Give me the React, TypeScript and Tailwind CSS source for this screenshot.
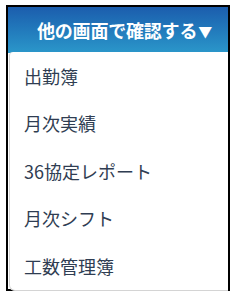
import React from "react";

const items = ["出勤簿", "月次実績", "36協定レポート", "月次シフト", "工数管理簿"];

export default function App() {
  return (
    <div
      className="w-[235px] h-[297px] bg-white pt-[5px] pl-[6px]"
      style={{ fontFamily: '"Noto Sans CJK JP", "Noto Sans", sans-serif' }}
    >
      <div className="w-[224px] h-[286px] border-2 border-black flex flex-col bg-white">
        <div className="h-[46px] shrink-0 bg-gradient-to-b from-[#1c5dad] to-[#2b97ca] flex items-center pl-[29px]">
          <span className="text-white font-bold text-[18px] leading-none tracking-[-0.2px]">
            他の画面で確認する
          </span>
          <span className="text-white text-[14px] leading-none ml-[1px] mt-[2px]">▼</span>
        </div>
        <div className="flex-1 ml-px mb-[2px] border-l border-b border-[#d4d4d4] rounded-bl-[6px] rounded-tl-[4px] flex flex-col -mt-px bg-white">
          {items.map((t) => (
            <div
              key={t}
              className="h-[47.5px] flex items-center pl-[14px] text-[18px] leading-none text-[#2f3d52]"
            >
              {t}
            </div>
          ))}
        </div>
      </div>
    </div>
  );
}
